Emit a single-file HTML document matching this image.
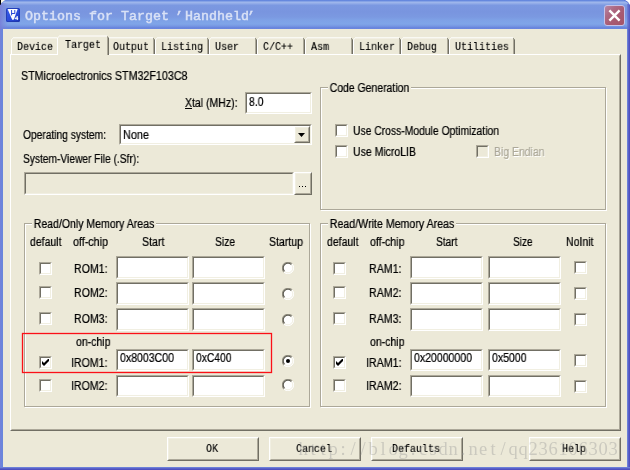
<!DOCTYPE html>
<html><head><meta charset="utf-8"><title>Options for Target 'Handheld'</title>
<style>
html,body{margin:0;padding:0;}
body{width:630px;height:470px;overflow:hidden;background:#ece9d8;position:relative;font-family:"Liberation Sans",sans-serif;font-size:12px;color:#000;}
.a{position:absolute;}
.t{will-change:transform;position:absolute;white-space:pre;line-height:14px;height:14px;transform-origin:0 0;font-size:12px;color:#000;-webkit-text-stroke:0.22px #000;}
.dis{color:#aca899;text-shadow:1px 1px 0 #fff;-webkit-text-stroke:0.2px #aca899;}
.gl{background:#ece9d8;}
.m{will-change:transform;position:absolute;white-space:pre;font-family:"Liberation Mono",monospace;font-size:12px;line-height:12px;height:12px;transform-origin:0 0;transform:scale(0.8333,0.889);color:#000;-webkit-text-stroke:0.15px #000;}
.edit{position:absolute;box-sizing:border-box;background:#fff;border:1px solid;border-color:#aca899 #fff #fff #aca899;}
.edit:before{content:"";position:absolute;left:0;top:0;right:0;bottom:0;border:1px solid;border-color:#716f64 #f1efe2 #f1efe2 #716f64;}
.edit.ro{background:#ece9d8;}
.btn{position:absolute;box-sizing:border-box;background:#ece9d8;border:1px solid;border-color:#fff #716f64 #716f64 #fff;}
.btn:before{content:"";position:absolute;left:0;top:0;right:0;bottom:0;border:1px solid;border-color:#f1efe2 #aca899 #aca899 #f1efe2;}
.cb{position:absolute;box-sizing:border-box;width:13px;height:13px;background:#fff;border:1px solid;border-color:#aca899 #fff #fff #aca899;}
.cb:before{content:"";position:absolute;left:0;top:0;right:0;bottom:0;border:1px solid;border-color:#716f64 #f1efe2 #f1efe2 #716f64;}
.cb.d{background:#ece9d8;}
.grp{position:absolute;box-sizing:border-box;border:1px solid #aca899;box-shadow:1px 1px 0 #fff, inset 1px 1px 0 #fff;}
</style></head><body>

<div class="a" style="left:0;top:0;width:630px;height:29px;background:linear-gradient(to bottom,#5f82dc 0px,#6c8ee0 1px,#a0b8ec 2px,#9ab2ea 3px,#8aa5e6 4px,#7b98e1 5.5px,#7995df 12px,#7b99e1 17px,#7ea1e6 20px,#7fa5e8 24px,#7798e3 26px,#6a87de 27.5px,#6985dd 29px);"></div>
<div class="a" style="left:0;top:29px;width:3px;height:441px;background:linear-gradient(to right,#7482d9 0,#7482d9 1px,#6c86dc 1px,#6a84dc 3px);"></div>
<div class="a" style="left:627px;top:29px;width:3px;height:441px;background:linear-gradient(to right,#6c80d8 0,#6c80d8 1px,#5a62c8 1px,#5a62c8 2px,#4e50c0 2px);"></div>
<div class="a" style="left:0;top:467px;width:630px;height:3px;background:linear-gradient(to bottom,#6c80d8 0,#6c80d8 1px,#5a62c8 1px,#5a62c8 2px,#4e50c0 2px);"></div>

<div class="a" style="left:627px;top:4px;width:3px;height:25px;background:linear-gradient(to right,rgba(108,112,208,.55) 0,rgba(90,98,200,.8) 1.5px,#5256c2 3px);"></div>
<div class="a" style="left:0;top:3px;width:8px;height:26px;background:linear-gradient(to right,rgba(120,126,216,.9) 0,rgba(122,132,216,.6) 3px,rgba(122,140,220,0) 8px);"></div>
<svg class="a" style="left:0;top:0" width="7" height="6"><path d="M1 0H6L1 4Z" fill="#7a96e0"/><rect x="0" y="0" width="1" height="4.7" fill="#000"/><path d="M1 0H5L1 3.2Z" fill="#fffbe8"/></svg>
<svg class="a" style="left:623px;top:0" width="7" height="7"><path d="M1 0H7V6Q5 2 1 0Z" fill="#4a62d0"/><path d="M2 0H7V5Q5.5 1.5 2 0Z" fill="#fff"/></svg>

<svg class="a" style="left:6px;top:8px" width="14" height="14" viewBox="0 0 14 14"><defs><linearGradient id="ig" x1="0" y1="0" x2="1" y2="1"><stop offset="0" stop-color="#3a60ea"/><stop offset="0.6" stop-color="#2848d8"/><stop offset="1" stop-color="#1a34b4"/></linearGradient></defs><rect x="0" y="0" width="14" height="14" rx="1.6" fill="url(#ig)"/><rect x="0.5" y="0.5" width="13" height="13" rx="1.4" fill="none" stroke="#2038a8" stroke-opacity=".7"/><path d="M1.6 1H11.7L7.7 11.7H6.2Z" fill="#fff"/><path d="M5.6 2V7.4M5.6 5.5H8.8M8.8 2V5.9" stroke="#2848d8" stroke-width="1" fill="none"/><path d="M11.3 12V8.3L9 10.7H12.2" stroke="#fff" stroke-width="1" fill="none"/></svg>

<div class="a" style="will-change:transform;left:25px;top:9px;font-family:'Liberation Mono',monospace;font-weight:normal;-webkit-text-stroke:0.45px #d9e1f6;font-size:13.333px;line-height:16px;white-space:pre;color:#d9e1f6;">Options for Target <span style="position:relative;left:-2px">’</span>Handheld<span style="position:relative;left:-2px">’</span></div>

<div class="a" style="left:604px;top:5px;width:21px;height:21px;box-sizing:border-box;border:1px solid #c6c2e8;border-radius:3px;background:linear-gradient(135deg,#b887a6 0%,#ad6a84 30%,#a85a72 60%,#a45468 100%);"></div>
<svg class="a" style="left:604px;top:5px" width="21" height="21"><path d="M5.4 5.4L15.6 15.6M15.6 5.4L5.4 15.6" stroke="#fff" stroke-width="2.4" stroke-linecap="butt"/></svg>

<div class="a" style="left:10px;top:54px;width:611px;height:377px;box-sizing:border-box;border:1px solid;border-color:#fff #716f64 #716f64 #fff;"></div>
<div class="a" style="left:11px;top:55px;width:609px;height:375px;box-sizing:border-box;border:1px solid;border-color:transparent #aca899 #aca899 transparent;"></div>

<svg class="a" style="left:0;top:0" width="630" height="60"><rect x="11" y="39.30" width="1" height="14.70" fill="#fff"/><rect x="12" y="38.30" width="1" height="1.00" fill="#fff"/><rect x="13" y="37.30" width="44" height="1.00" fill="#fff"/><rect x="109" y="37.30" width="44" height="1.00" fill="#fff"/><rect x="153" y="39.30" width="1" height="14.70" fill="#aca899"/><rect x="154" y="39.30" width="1" height="14.70" fill="#716f64"/><rect x="153" y="38.30" width="1" height="1.00" fill="#716f64"/><rect x="155" y="39.30" width="1" height="14.70" fill="#fff"/><rect x="156" y="38.30" width="1" height="1.00" fill="#fff"/><rect x="157" y="37.30" width="50" height="1.00" fill="#fff"/><rect x="207" y="39.30" width="1" height="14.70" fill="#aca899"/><rect x="208" y="39.30" width="1" height="14.70" fill="#716f64"/><rect x="207" y="38.30" width="1" height="1.00" fill="#716f64"/><rect x="209" y="39.30" width="1" height="14.70" fill="#fff"/><rect x="210" y="38.30" width="1" height="1.00" fill="#fff"/><rect x="211" y="37.30" width="44" height="1.00" fill="#fff"/><rect x="255" y="39.30" width="1" height="14.70" fill="#aca899"/><rect x="256" y="39.30" width="1" height="14.70" fill="#716f64"/><rect x="255" y="38.30" width="1" height="1.00" fill="#716f64"/><rect x="257" y="39.30" width="1" height="14.70" fill="#fff"/><rect x="258" y="38.30" width="1" height="1.00" fill="#fff"/><rect x="259" y="37.30" width="44" height="1.00" fill="#fff"/><rect x="303" y="39.30" width="1" height="14.70" fill="#aca899"/><rect x="304" y="39.30" width="1" height="14.70" fill="#716f64"/><rect x="303" y="38.30" width="1" height="1.00" fill="#716f64"/><rect x="305" y="39.30" width="1" height="14.70" fill="#fff"/><rect x="306" y="38.30" width="1" height="1.00" fill="#fff"/><rect x="307" y="37.30" width="44" height="1.00" fill="#fff"/><rect x="351" y="39.30" width="1" height="14.70" fill="#aca899"/><rect x="352" y="39.30" width="1" height="14.70" fill="#716f64"/><rect x="351" y="38.30" width="1" height="1.00" fill="#716f64"/><rect x="353" y="39.30" width="1" height="14.70" fill="#fff"/><rect x="354" y="38.30" width="1" height="1.00" fill="#fff"/><rect x="355" y="37.30" width="44" height="1.00" fill="#fff"/><rect x="399" y="39.30" width="1" height="14.70" fill="#aca899"/><rect x="400" y="39.30" width="1" height="14.70" fill="#716f64"/><rect x="399" y="38.30" width="1" height="1.00" fill="#716f64"/><rect x="401" y="39.30" width="1" height="14.70" fill="#fff"/><rect x="402" y="38.30" width="1" height="1.00" fill="#fff"/><rect x="403" y="37.30" width="44" height="1.00" fill="#fff"/><rect x="447" y="39.30" width="1" height="14.70" fill="#aca899"/><rect x="448" y="39.30" width="1" height="14.70" fill="#716f64"/><rect x="447" y="38.30" width="1" height="1.00" fill="#716f64"/><rect x="449" y="39.30" width="1" height="14.70" fill="#fff"/><rect x="450" y="38.30" width="1" height="1.00" fill="#fff"/><rect x="451" y="37.30" width="62" height="1.00" fill="#fff"/><rect x="513" y="39.30" width="1" height="14.70" fill="#aca899"/><rect x="514" y="39.30" width="1" height="14.70" fill="#716f64"/><rect x="513" y="38.30" width="1" height="1.00" fill="#716f64"/><rect x="57" y="35.50" width="52" height="20.00" fill="#ece9d8"/><rect x="57" y="37.50" width="1" height="17.50" fill="#fff"/><rect x="58" y="36.50" width="1" height="1.00" fill="#fff"/><rect x="59" y="35.50" width="48" height="1.00" fill="#fff"/><rect x="107" y="37.50" width="1" height="17.50" fill="#aca899"/><rect x="108" y="37.50" width="1" height="17.50" fill="#716f64"/><rect x="107" y="36.50" width="1" height="1.00" fill="#716f64"/></svg>
<div class="m" style="left:16.7px;top:42px;">Device</div>
<div class="m" style="left:112.7px;top:42px;">Output</div>
<div class="m" style="left:160.7px;top:42px;">Listing</div>
<div class="m" style="left:214.7px;top:42px;">User</div>
<div class="m" style="left:262.7px;top:42px;">C/C++</div>
<div class="m" style="left:310.7px;top:42px;">Asm</div>
<div class="m" style="left:358.7px;top:42px;">Linker</div>
<div class="m" style="left:406.7px;top:42px;">Debug</div>
<div class="m" style="left:454.7px;top:42px;">Utilities</div>
<div class="m" style="left:64.7px;top:40px;">Target</div>
<div class="grp" style="left:320px;top:87px;width:286px;height:123px;"></div>
<div class="grp" style="left:24px;top:223px;width:286px;height:184px;"></div>
<div class="grp" style="left:320px;top:223px;width:286px;height:184px;"></div>
<div class="edit" style="left:245px;top:92px;width:67px;height:22px;"></div>
<div class="edit" style="left:119px;top:124px;width:193px;height:21px;"></div>
<div class="btn" style="left:294px;top:126px;width:16px;height:17px;"></div>
<svg class="a" style="left:298px;top:133px" width="8" height="5"><path d="M0 0H7L3.5 4Z" fill="#000"/></svg>
<div class="edit ro" style="left:24px;top:172px;width:270px;height:23px;"></div>
<div class="btn" style="left:294px;top:172px;width:18px;height:23px;"></div>
<div class="a" style="left:299px;top:186px;width:1px;height:1px;background:#000;box-shadow:3px 0 0 #000,6px 0 0 #000;"></div>
<div class="edit" style="left:116px;top:256px;width:73px;height:23px;"></div>
<div class="edit" style="left:192px;top:256px;width:73px;height:23px;"></div>
<div class="edit" style="left:410px;top:256px;width:73px;height:23px;"></div>
<div class="edit" style="left:488px;top:256px;width:73px;height:23px;"></div>
<div class="edit" style="left:116px;top:282px;width:73px;height:23px;"></div>
<div class="edit" style="left:192px;top:282px;width:73px;height:23px;"></div>
<div class="edit" style="left:410px;top:282px;width:73px;height:23px;"></div>
<div class="edit" style="left:488px;top:282px;width:73px;height:23px;"></div>
<div class="edit" style="left:116px;top:308px;width:73px;height:23px;"></div>
<div class="edit" style="left:192px;top:308px;width:73px;height:23px;"></div>
<div class="edit" style="left:410px;top:308px;width:73px;height:23px;"></div>
<div class="edit" style="left:488px;top:308px;width:73px;height:23px;"></div>
<div class="edit" style="left:116px;top:349px;width:73px;height:22px;"></div>
<div class="edit" style="left:192px;top:349px;width:73px;height:22px;"></div>
<div class="edit" style="left:410px;top:349px;width:73px;height:22px;"></div>
<div class="edit" style="left:488px;top:349px;width:73px;height:22px;"></div>
<div class="edit" style="left:116px;top:375px;width:73px;height:22px;"></div>
<div class="edit" style="left:192px;top:375px;width:73px;height:22px;"></div>
<div class="edit" style="left:410px;top:375px;width:73px;height:22px;"></div>
<div class="edit" style="left:488px;top:375px;width:73px;height:22px;"></div>
<div class="cb" style="left:335px;top:124px;"></div>
<div class="cb" style="left:335px;top:145px;"></div>
<div class="cb d" style="left:476px;top:145px;"></div>
<div class="cb" style="left:39px;top:262px;"></div>
<div class="cb" style="left:333px;top:262px;"></div>
<div class="cb" style="left:39px;top:286px;"></div>
<div class="cb" style="left:333px;top:286px;"></div>
<div class="cb" style="left:39px;top:312px;"></div>
<div class="cb" style="left:333px;top:312px;"></div>
<div class="cb" style="left:39px;top:356px;"><svg class="a" style="left:2px;top:2px" width="7" height="7"><path d="M0 2V5L2 7L7 2V-1L2 4Z" fill="#000"/></svg></div>
<div class="cb" style="left:333px;top:356px;"><svg class="a" style="left:2px;top:2px" width="7" height="7"><path d="M0 2V5L2 7L7 2V-1L2 4Z" fill="#000"/></svg></div>
<div class="cb" style="left:39px;top:379px;"></div>
<div class="cb" style="left:333px;top:379px;"></div>
<div class="cb" style="left:574px;top:261px;"></div>
<div class="cb" style="left:574px;top:287px;"></div>
<div class="cb" style="left:574px;top:313px;"></div>
<div class="cb" style="left:574px;top:354px;"></div>
<div class="cb" style="left:574px;top:380px;"></div>
<svg class="a" style="left:282px;top:261.5px" width="12" height="12" viewBox="0 0 12 12"><circle cx="6" cy="6" r="5.5" fill="#fff"/><path d="M1.9 10.1A5.8 5.8 0 0 1 10.1 1.9" stroke="#9a9788" stroke-width="1.1" fill="none"/><path d="M2.6 9.4A4.8 4.8 0 0 1 9.4 2.6" stroke="#5e5c52" stroke-width="1.2" fill="none"/><path d="M10.1 1.9A5.8 5.8 0 0 1 1.9 10.1" stroke="#fff" stroke-width="1" fill="none"/><path d="M9.4 2.6A4.8 4.8 0 0 1 2.6 9.4" stroke="#f1efe2" stroke-width="1" fill="none"/></svg>
<svg class="a" style="left:282px;top:287.5px" width="12" height="12" viewBox="0 0 12 12"><circle cx="6" cy="6" r="5.5" fill="#fff"/><path d="M1.9 10.1A5.8 5.8 0 0 1 10.1 1.9" stroke="#9a9788" stroke-width="1.1" fill="none"/><path d="M2.6 9.4A4.8 4.8 0 0 1 9.4 2.6" stroke="#5e5c52" stroke-width="1.2" fill="none"/><path d="M10.1 1.9A5.8 5.8 0 0 1 1.9 10.1" stroke="#fff" stroke-width="1" fill="none"/><path d="M9.4 2.6A4.8 4.8 0 0 1 2.6 9.4" stroke="#f1efe2" stroke-width="1" fill="none"/></svg>
<svg class="a" style="left:282px;top:313.5px" width="12" height="12" viewBox="0 0 12 12"><circle cx="6" cy="6" r="5.5" fill="#fff"/><path d="M1.9 10.1A5.8 5.8 0 0 1 10.1 1.9" stroke="#9a9788" stroke-width="1.1" fill="none"/><path d="M2.6 9.4A4.8 4.8 0 0 1 9.4 2.6" stroke="#5e5c52" stroke-width="1.2" fill="none"/><path d="M10.1 1.9A5.8 5.8 0 0 1 1.9 10.1" stroke="#fff" stroke-width="1" fill="none"/><path d="M9.4 2.6A4.8 4.8 0 0 1 2.6 9.4" stroke="#f1efe2" stroke-width="1" fill="none"/></svg>
<svg class="a" style="left:282px;top:354.5px" width="12" height="12" viewBox="0 0 12 12"><circle cx="6" cy="6" r="5.5" fill="#fff"/><path d="M1.9 10.1A5.8 5.8 0 0 1 10.1 1.9" stroke="#9a9788" stroke-width="1.1" fill="none"/><path d="M2.6 9.4A4.8 4.8 0 0 1 9.4 2.6" stroke="#5e5c52" stroke-width="1.2" fill="none"/><path d="M10.1 1.9A5.8 5.8 0 0 1 1.9 10.1" stroke="#fff" stroke-width="1" fill="none"/><path d="M9.4 2.6A4.8 4.8 0 0 1 2.6 9.4" stroke="#f1efe2" stroke-width="1" fill="none"/><circle cx="6" cy="6" r="2" fill="#000"/></svg>
<svg class="a" style="left:282px;top:378.5px" width="12" height="12" viewBox="0 0 12 12"><circle cx="6" cy="6" r="5.5" fill="#fff"/><path d="M1.9 10.1A5.8 5.8 0 0 1 10.1 1.9" stroke="#9a9788" stroke-width="1.1" fill="none"/><path d="M2.6 9.4A4.8 4.8 0 0 1 9.4 2.6" stroke="#5e5c52" stroke-width="1.2" fill="none"/><path d="M10.1 1.9A5.8 5.8 0 0 1 1.9 10.1" stroke="#fff" stroke-width="1" fill="none"/><path d="M9.4 2.6A4.8 4.8 0 0 1 2.6 9.4" stroke="#f1efe2" stroke-width="1" fill="none"/></svg>
<svg class="a" style="left:20px;top:331px" width="254" height="44"><rect x="2.5" y="2.5" width="249" height="39" fill="none" stroke="#fb1018" stroke-width="1.3"/></svg>
<div class="t " style="left:20.8px;top:69px;transform:scaleX(0.8916);">STMicroelectronics STM32F103C8</div>
<div class="t " style="left:185.3px;top:96px;transform:scaleX(0.8750);"><span style="text-decoration:underline">X</span>tal (MHz):</div>
<div class="t " style="left:23px;top:128px;transform:scaleX(0.8524);">Operating system:</div>
<div class="t " style="left:22.8px;top:152px;transform:scaleX(0.8500);">System-Viewer File (.Sfr):</div>
<div class="t gl" style="left:329.5px;top:81px;transform:scaleX(0.8697);padding:0 2px;margin-left:-2px;">Code Generation</div>
<div class="t " style="left:352.8px;top:124px;transform:scaleX(0.8619);">Use Cross-Module Optimization</div>
<div class="t " style="left:352.8px;top:145px;transform:scaleX(0.8746);">Use MicroLIB</div>
<div class="t dis" style="left:494px;top:145px;transform:scaleX(0.8700);">Big Endian</div>
<div class="t gl" style="left:33.5px;top:217px;transform:scaleX(0.8771);padding:0 2px;margin-left:-2px;">Read/Only Memory Areas</div>
<div class="t gl" style="left:329.5px;top:217px;transform:scaleX(0.8861);padding:0 2px;margin-left:-2px;">Read/Write Memory Areas</div>
<div class="t " style="left:29.5px;top:235px;transform:scaleX(0.8742);">default</div>
<div class="t " style="left:73px;top:235px;transform:scaleX(0.8942);">off-chip</div>
<div class="t " style="left:142px;top:235px;transform:scaleX(0.8878);">Start</div>
<div class="t " style="left:215px;top:235px;transform:scaleX(0.8568);">Size</div>
<div class="t " style="left:269px;top:235px;transform:scaleX(0.8785);">Startup</div>
<div class="t " style="left:74px;top:262px;transform:scaleX(0.8812);">ROM1:</div>
<div class="t " style="left:74px;top:286px;transform:scaleX(0.8812);">ROM2:</div>
<div class="t " style="left:74px;top:311.5px;transform:scaleX(0.8812);">ROM3:</div>
<div class="t " style="left:75.6px;top:334.5px;transform:scaleX(0.8765);">on-chip</div>
<div class="t " style="left:71px;top:356px;transform:scaleX(0.8828);">IROM1:</div>
<div class="t " style="left:71px;top:379px;transform:scaleX(0.8828);">IROM2:</div>
<div class="t " style="left:326.5px;top:235px;transform:scaleX(0.8742);">default</div>
<div class="t " style="left:369.5px;top:235px;transform:scaleX(0.8814);">off-chip</div>
<div class="t " style="left:436px;top:235px;transform:scaleX(0.8483);">Start</div>
<div class="t " style="left:512.5px;top:235px;transform:scaleX(0.8353);">Size</div>
<div class="t " style="left:566px;top:235px;transform:scaleX(0.8769);">NoInit</div>
<div class="t " style="left:369px;top:262px;transform:scaleX(0.8859);">RAM1:</div>
<div class="t " style="left:369px;top:286px;transform:scaleX(0.8859);">RAM2:</div>
<div class="t " style="left:369px;top:311.5px;transform:scaleX(0.8859);">RAM3:</div>
<div class="t " style="left:370px;top:334.5px;transform:scaleX(0.8765);">on-chip</div>
<div class="t " style="left:366px;top:356px;transform:scaleX(0.8872);">IRAM1:</div>
<div class="t " style="left:366px;top:379px;transform:scaleX(0.8872);">IRAM2:</div>
<div class="t " style="left:248.5px;top:94.8px;transform:scaleX(0.8689);">8.0</div>
<div class="t " style="left:123px;top:128px;transform:scaleX(0.9063);">None</div>
<div class="t " style="left:119.5px;top:351px;transform:scaleX(0.8796);">0x8003C00</div>
<div class="t " style="left:195.5px;top:351px;transform:scaleX(0.8580);">0xC400</div>
<div class="t " style="left:413.5px;top:351px;transform:scaleX(0.8777);">0x20000000</div>
<div class="t " style="left:491.5px;top:351px;transform:scaleX(0.8762);">0x5000</div>
<div class="btn" style="left:167px;top:437px;width:92px;height:24px;"></div>
<div class="m" style="left:206.3px;top:444px;">OK</div>
<div class="btn" style="left:269px;top:437px;width:92px;height:24px;"></div>
<div class="m" style="left:296.3px;top:444px;">Cancel</div>
<div class="btn" style="left:371px;top:437px;width:92px;height:24px;"></div>
<div class="m" style="left:392.3px;top:444px;">Defaults</div>
<div class="btn" style="left:529px;top:437px;width:92px;height:24px;"></div>
<div class="m" style="left:562.3px;top:444px;">Help</div>
<div class="a" style="will-change:transform;left:298px;top:437px;height:24px;white-space:nowrap;font-size:0;font-family:'Liberation Serif',serif;line-height:24px;color:rgba(150,150,150,0.38);"><span style="display:inline-block;width:10px;text-align:center;font-size:18.5px;">h</span><span style="display:inline-block;width:10px;text-align:center;font-size:18.5px;">t</span><span style="display:inline-block;width:10px;text-align:center;font-size:18.5px;">t</span><span style="display:inline-block;width:10px;text-align:center;font-size:18.5px;">p</span><span style="display:inline-block;width:10px;text-align:center;font-size:18.5px;">:</span><span style="display:inline-block;width:10px;text-align:center;font-size:18.5px;">/</span><span style="display:inline-block;width:10px;text-align:center;font-size:18.5px;">/</span><span style="display:inline-block;width:10px;text-align:center;font-size:18.5px;">b</span><span style="display:inline-block;width:10px;text-align:center;font-size:18.5px;">l</span><span style="display:inline-block;width:10px;text-align:center;font-size:18.5px;">o</span><span style="display:inline-block;width:10px;text-align:center;font-size:18.5px;">g</span><span style="display:inline-block;width:10px;text-align:center;font-size:18.5px;">.</span><span style="display:inline-block;width:10px;text-align:center;font-size:18.5px;">c</span><span style="display:inline-block;width:10px;text-align:center;font-size:18.5px;">s</span><span style="display:inline-block;width:10px;text-align:center;font-size:18.5px;">d</span><span style="display:inline-block;width:10px;text-align:center;font-size:18.5px;">n</span><span style="display:inline-block;width:10px;text-align:center;font-size:18.5px;">.</span><span style="display:inline-block;width:10px;text-align:center;font-size:18.5px;">n</span><span style="display:inline-block;width:10px;text-align:center;font-size:18.5px;">e</span><span style="display:inline-block;width:10px;text-align:center;font-size:18.5px;">t</span><span style="display:inline-block;width:10px;text-align:center;font-size:18.5px;">/</span><span style="display:inline-block;width:10px;text-align:center;font-size:18.5px;">q</span><span style="display:inline-block;width:10px;text-align:center;font-size:18.5px;">q</span><span style="display:inline-block;width:10px;text-align:center;font-size:18.5px;">2</span><span style="display:inline-block;width:10px;text-align:center;font-size:18.5px;">3</span><span style="display:inline-block;width:10px;text-align:center;font-size:18.5px;">6</span><span style="display:inline-block;width:10px;text-align:center;font-size:18.5px;">1</span><span style="display:inline-block;width:10px;text-align:center;font-size:18.5px;">0</span><span style="display:inline-block;width:10px;text-align:center;font-size:18.5px;">6</span><span style="display:inline-block;width:10px;text-align:center;font-size:18.5px;">3</span><span style="display:inline-block;width:10px;text-align:center;font-size:18.5px;">0</span><span style="display:inline-block;width:10px;text-align:center;font-size:18.5px;">3</span></div>
</body></html>
